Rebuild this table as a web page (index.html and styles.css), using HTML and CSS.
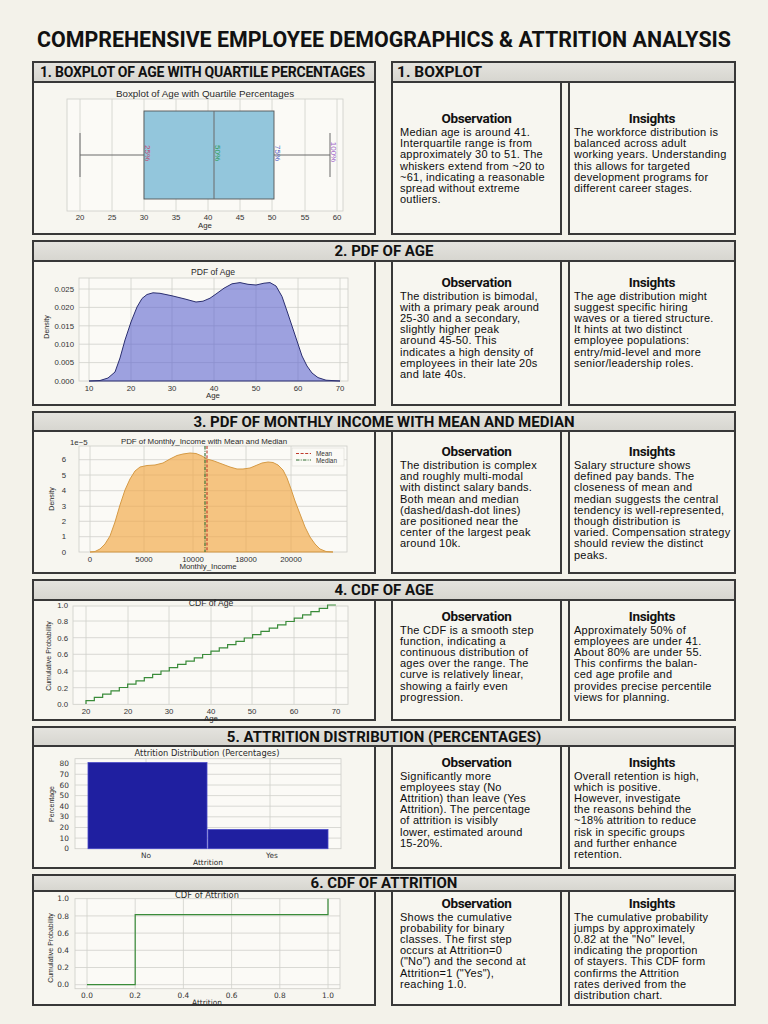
FILE: index.html
```html
<!DOCTYPE html>
<html lang="en">
<head>
<meta charset="utf-8">
<title>Comprehensive Employee Demographics &amp; Attrition Analysis</title>
<link rel="stylesheet" href="styles.css">
</head>
<body>
<div class="page">
  <h1 class="title">COMPREHENSIVE EMPLOYEE DEMOGRAPHICS &amp; ATTRITION ANALYSIS</h1>

  <section class="sec split s1">
    <div class="col-chart">
      <div class="hdr hdr-l">1. BOXPLOT OF AGE WITH QUARTILE PERCENTAGES</div>
      <div class="chart">
        <svg width="340" height="150" viewBox="34 83 340 150">
          <rect class="pbg" x="67" y="99" width="276" height="112"/>
          <text class="ct ct-big" x="205" y="97">Boxplot of Age with Quartile Percentages</text>
          <path class="grid" d="M80 99V211M112 99V211M144 99V211M176 99V211M208 99V211M240 99V211M272 99V211M305 99V211M337 99V211"/>
          <path class="whisk" d="M80 155H144M274 155H330M80 133V177M330 133V177"/>
          <rect class="qbox" x="144" y="111" width="130" height="88"/>
          <path class="whisk" d="M214 111V199"/>
          <text class="ql" fill="#c2456b" transform="translate(145 153) rotate(90)">25%</text>
          <text class="ql" fill="#2c9a55" transform="translate(215 153) rotate(90)">50%</text>
          <text class="ql" fill="#4a5cc4" transform="translate(275 153) rotate(90)">75%</text>
          <text class="ql" fill="#9a5ec8" transform="translate(331 152) rotate(90)">100%</text>
          <g class="tk tkm">
            <text x="80" y="220">20</text><text x="112" y="220">25</text><text x="144" y="220">30</text>
            <text x="176" y="220">35</text><text x="208" y="220">40</text><text x="240" y="220">45</text>
            <text x="272" y="220">50</text><text x="305" y="220">55</text><text x="337" y="220">60</text>
          </g>
          <text class="al" x="205" y="228">Age</text>
        </svg>
      </div>
    </div>
    <div class="col-text">
      <div class="hdr hdr-r">1. BOXPLOT</div>
      <div class="notes">
        <div class="note obs">
          <h3>Observation</h3>
          <p>Median age is around 41.<br>Interquartile range is from<br>approximately 30 to 51. The<br>whiskers extend from ~20 to<br>~61, indicating a reasonable<br>spread without extreme<br>outliers.</p>
        </div>
        <div class="note ins">
          <h3>Insights</h3>
          <p>The workforce distribution is<br>balanced across adult<br>working years. Understanding<br>this allows for targeted<br>development programs for<br>different career stages.</p>
        </div>
      </div>
    </div>
  </section>

  <section class="sec s2">
    <div class="hdr hdr-c">2. PDF OF AGE</div>
    <div class="body">
      <div class="chart">
        <svg width="340" height="142" viewBox="34 262 340 142">
          <rect class="pbg" x="79" y="278" width="269" height="103"/>
          <text class="ct" x="213" y="275">PDF of Age</text>
          <path class="grid" d="M89 278V381M131 278V381M172 278V381M214 278V381M256 278V381M298 278V381M340 278V381M79 289H348M79 307.4H348M79 325.8H348M79 344.2H348M79 362.6H348"/>
          <path class="kde-age" d="M89 381L100 380.5L108 378L115 372L120 358L125 340L131 322L137 307L142 298.5L147 294.5L153 292.8L160 293.3L172 295.8L185 299L196 302L203 301.2L210 298.2L216 294L224 288.2L232 283.8L240 282.6L248 284.3L256 285L264 283.2L270 282.6L276 286L282 296.5L288 314L294 332L298 344L302 356L307 366L312 373L318 377.6L326 380.2L340 381Z"/>
          <g class="tk tke">
            <text x="74" y="291.8">0.025</text><text x="74" y="310.2">0.020</text><text x="74" y="328.6">0.015</text>
            <text x="74" y="347">0.010</text><text x="74" y="365.4">0.005</text><text x="74" y="383.8">0.000</text>
          </g>
          <g class="tk tkm">
            <text x="89" y="390.5">10</text><text x="131" y="390.5">20</text><text x="172" y="390.5">30</text>
            <text x="214" y="390.5">40</text><text x="256" y="390.5">50</text><text x="298" y="390.5">60</text><text x="340" y="390.5">70</text>
          </g>
          <text class="al" x="213" y="398">Age</text>
          <text class="al yl" transform="translate(49 327) rotate(-90)">Density</text>
        </svg>
      </div>
      <div class="notes">
        <div class="note obs">
          <h3>Observation</h3>
          <p>The distribution is bimodal,<br>with a primary peak around<br>25-30 and a secondary,<br>slightly higher peak<br>around 45-50. This<br>indicates a high density of<br>employees in their late 20s<br>and late 40s.</p>
        </div>
        <div class="note ins">
          <h3>Insights</h3>
          <p>The age distribution might<br>suggest specific hiring<br>waves or a tiered structure.<br>It hints at two distinct<br>employee populations:<br>entry/mid-level and more<br>senior/leadership roles.</p>
        </div>
      </div>
    </div>
  </section>

  <section class="sec s3">
    <div class="hdr hdr-c">3. PDF OF MONTHLY INCOME WITH MEAN AND MEDIAN</div>
    <div class="body">
      <div class="chart">
        <svg width="340" height="140" viewBox="34 432 340 140">
          <rect class="pbg" x="79" y="446" width="268" height="106"/>
          <text class="ct ct-sm" x="204" y="444">PDF of Monthly_Income with Mean and Median</text>
          <text class="tk" x="70" y="445">1e−5</text>
          <path class="grid" d="M90 446V552M144 446V552M193 446V552M246 446V552M291 446V552M79 459.7H347M79 475H347M79 490.7H347M79 506.3H347M79 521.3H347M79 536.7H347"/>
          <path class="kde-inc" d="M90 552L95 551.5L100 549L105 544L110 536L115 522L120 505L125 490L130 479L135 471L140 467L147 465.5L155 465L163 463L170 459L177 455.5L183 454L190 453L196 453.5L202 456L207 459L214 461L222 464L230 467L237 469L243 469L250 468L256 465.5L262 463L268 462L273 462.5L278 465L283 470L287 478L291 489L295 501L300 514L305 527L310 537L315 544L320 549L326 551.5L333 552Z"/>
          <path class="mean" d="M207 446V552"/>
          <path class="median" d="M205 446V552"/>
          <rect class="legend" x="292" y="448" width="52" height="18"/>
          <path class="mean" d="M296 453.5H311"/>
          <path class="median" d="M296 460H311"/>
          <text class="lg" x="316" y="456">Mean</text>
          <text class="lg" x="316" y="462.5">Median</text>
          <g class="tk tke">
            <text x="66" y="462.3">6</text><text x="66" y="477.6">5</text><text x="66" y="493.3">4</text>
            <text x="66" y="508.9">3</text><text x="66" y="523.9">2</text><text x="66" y="539.3">1</text><text x="66" y="554.6">0</text>
          </g>
          <g class="tk tkm">
            <text x="90" y="562">0</text><text x="144" y="562">5000</text><text x="193" y="562">10000</text>
            <text x="246" y="562">18000</text><text x="291" y="562">20000</text>
          </g>
          <text class="al" x="208" y="569">Monthly_Income</text>
          <text class="al yl" transform="translate(54 499) rotate(-90)">Density</text>
        </svg>
      </div>
      <div class="notes">
        <div class="note obs">
          <h3>Observation</h3>
          <p>The distribution is complex<br>and roughly multi-modal<br>with distinct salary bands.<br>Both mean and median<br>(dashed/dash-dot lines)<br>are positioned near the<br>center of the largest peak<br>around 10k.</p>
        </div>
        <div class="note ins">
          <h3>Insights</h3>
          <p>Salary structure shows<br>defined pay bands. The<br>closeness of mean and<br>median suggests the central<br>tendency is well-represented,<br>though distribution is<br>varied. Compensation strategy<br>should review the distinct<br>peaks.</p>
        </div>
      </div>
    </div>
  </section>

  <section class="sec s4">
    <div class="hdr hdr-c">4. CDF OF AGE</div>
    <div class="body">
      <div class="chart">
        <svg width="340" height="118" viewBox="34 601 340 118">
          <rect class="pbg" x="73" y="606" width="275" height="98.3"/>
          <text class="ct" x="211" y="605.5">CDF of Age</text>
          <path class="grid" d="M86 606V704.3M128 606V704.3M169 606V704.3M211 606V704.3M252 606V704.3M294 606V704.3M336 606V704.3M73 621H348M73 637.7H348M73 654.3H348M73 671H348M73 687.7H348"/>
          <path class="step" d="M86 704 v-3.3h8.33v-3.3h8.33v-3.3h8.33v-3.3h8.33v-3.3h8.33 v-3.3h8.33v-3.3h8.33v-3.3h8.33v-3.3h8.33v-3.3h8.33 v-3.3h8.33v-3.3h8.33v-3.3h8.33v-3.3h8.33v-3.3h8.33 v-3.3h8.33v-3.3h8.33v-3.3h8.33v-3.3h8.33v-3.3h8.33 v-3.3h8.33v-3.3h8.33v-3.3h8.33v-3.3h8.33v-3.3h8.33 v-3.3h8.33v-3.3h8.33v-3.3h8.33v-3.3h8.33v-3.3h8.33"/>
          <g class="tk tke">
            <text x="68" y="608">1.0</text><text x="68" y="623.8">0.8</text><text x="68" y="640.5">0.6</text>
            <text x="68" y="657.1">0.6</text><text x="68" y="673.8">0.4</text><text x="68" y="690.5">0.2</text><text x="68" y="707.1">0.0</text>
          </g>
          <g class="tk tkm">
            <text x="86" y="713.5">20</text><text x="128" y="713.5">20</text><text x="169" y="713.5">30</text>
            <text x="211" y="713.5">40</text><text x="252" y="713.5">50</text><text x="294" y="713.5">60</text><text x="336" y="713.5">70</text>
          </g>
          <text class="al" x="211" y="720.5">Age</text>
          <text class="al yl" transform="translate(51 656) rotate(-90)">Cumulative Probability</text>
        </svg>
      </div>
      <div class="notes">
        <div class="note obs">
          <h3>Observation</h3>
          <p>The CDF is a smooth step<br>function, indicating a<br>continuous distribution of<br>ages over the range. The<br>curve is relatively linear,<br>showing a fairly even<br>progression.</p>
        </div>
        <div class="note ins">
          <h3>Insights</h3>
          <p>Approximately 50% of<br>employees are under 41.<br>About 80% are under 55.<br>This confirms the balan-<br>ced age profile and<br>provides precise percentile<br>views for planning.</p>
        </div>
      </div>
    </div>
  </section>

  <section class="sec s5">
    <div class="hdr hdr-c">5. ATTRITION DISTRIBUTION (PERCENTAGES)</div>
    <div class="body">
      <div class="chart">
        <svg width="340" height="120" viewBox="34 747 340 120">
          <rect class="pbg" x="75" y="758.7" width="266" height="90"/>
          <text class="ct alt" x="207" y="756.3">Attrition Distribution (Percentages)</text>
          <path class="grid" d="M146 758.7V848.7M270 758.7V848.7M75 763.7H341M75 774.3H341M75 785H341M75 795.6H341M75 806.2H341M75 816.8H341M75 827.5H341M75 838.1H341"/>
          <rect class="bar" x="88" y="762.6" width="119" height="86.1"/>
          <rect class="bar" x="208" y="829.6" width="120" height="19.1"/>
          <g class="tk tke alt">
            <text x="69" y="766.3">80</text><text x="69" y="776.9">70</text><text x="69" y="787.6">60</text>
            <text x="69" y="798.2">50</text><text x="69" y="808.8">40</text><text x="69" y="819.4">30</text>
            <text x="69" y="830.1">20</text><text x="69" y="840.7">10</text><text x="69" y="851.3">0</text>
          </g>
          <g class="tk tkm alt">
            <text x="146" y="858">No</text><text x="272" y="858">Yes</text>
          </g>
          <text class="al alt" x="208" y="865">Attrition</text>
          <text class="al yl" transform="translate(54 804) rotate(-90)">Percentage</text>
        </svg>
      </div>
      <div class="notes">
        <div class="note obs">
          <h3>Observation</h3>
          <p>Significantly more<br>employees stay (No<br>Attrition) than leave (Yes<br>Attrition). The percentage<br>of attrition is visibly<br>lower, estimated around<br>15-20%.</p>
        </div>
        <div class="note ins">
          <h3>Insights</h3>
          <p>Overall retention is high,<br>which is positive.<br>However, investigate<br>the reasons behind the<br>~18% attrition to reduce<br>risk in specific groups<br>and further enhance<br>retention.</p>
        </div>
      </div>
    </div>
  </section>

  <section class="sec s6">
    <div class="hdr hdr-c">6. CDF OF ATTRITION</div>
    <div class="body">
      <div class="chart">
        <svg width="340" height="112" viewBox="34 892 340 112">
          <rect class="pbg" x="75" y="898.7" width="265" height="90"/>
          <text class="ct alt" x="207" y="898">CDF of Attrition</text>
          <path class="grid" d="M87 898.7V988.7M135.2 898.7V988.7M183.4 898.7V988.7M231.6 898.7V988.7M279.8 898.7V988.7M328 898.7V988.7M75 915.9H340M75 933.1H340M75 950.3H340M75 967.5H340M75 984.7H340"/>
          <path class="step" d="M87 984.7H135.2V914.7H328V898.7"/>
          <g class="tk tke alt">
            <text x="69" y="901.3">1.0</text><text x="69" y="918.5">0.8</text><text x="69" y="935.7">0.6</text>
            <text x="69" y="952.9">0.4</text><text x="69" y="970.1">0.2</text><text x="69" y="987.3">0.0</text>
          </g>
          <g class="tk tkm alt">
            <text x="87" y="998">0.0</text><text x="135.2" y="998">0.2</text><text x="183.4" y="998">0.4</text>
            <text x="231.6" y="998">0.6</text><text x="279.8" y="998">0.8</text><text x="328" y="998">1.0</text>
          </g>
          <text class="al alt" x="207" y="1004.5">Attrition</text>
          <text class="al yl" transform="translate(53 948) rotate(-90)">Cumulative Probability</text>
        </svg>
      </div>
      <div class="notes">
        <div class="note obs">
          <h3>Observation</h3>
          <p>Shows the cumulative<br>probability for binary<br>classes. The first step<br>occurs at Attrition=0<br>("No") and the second at<br>Attrition=1 ("Yes"),<br>reaching 1.0.</p>
        </div>
        <div class="note ins">
          <h3>Insights</h3>
          <p>The cumulative probability<br>jumps by approximately<br>0.82 at the "No" level,<br>indicating the proportion<br>of stayers. This CDF form<br>confirms the Attrition<br>rates derived from the<br>distribution chart.</p>
        </div>
      </div>
    </div>
  </section>
</div>
</body>
</html>
```

FILE: styles.css
```css
* { box-sizing: border-box; }
html, body { margin: 0; padding: 0; }
body {
  width: 768px;
  height: 1024px;
  overflow: hidden;
  background: #f3f2ea;
  color: #151515;
  font-family: "Liberation Sans", Arial, sans-serif;
}
.page {
  padding: 28px 32px 0;
  display: flex;
  flex-direction: column;
  gap: 5px;
}
.title {
  margin: 0 -32px 4px;
  text-align: center;
  font-family: Roboto, "Liberation Sans", sans-serif;
  font-weight: 700;
  font-size: 21.4px;
  line-height: 24px;
  color: #111;
  white-space: nowrap;
}
.sec { display: flex; flex-direction: column; }
.split { flex-direction: row; gap: 15px; }
.col-chart { width: 344px; flex: none; display: flex; flex-direction: column; }
.col-text { flex: 1; display: flex; flex-direction: column; }

.hdr {
  flex: none;
  height: 22px;
  border: 2px solid #383838;
  background: linear-gradient(#e4e3de, #d7d6d0);
  font-family: Roboto, "Liberation Sans", sans-serif;
  font-weight: 700;
  font-size: 15px;
  color: #111;
  display: flex;
  align-items: center;
  padding: 0 6px;
  white-space: nowrap;
  overflow: hidden;
}
.hdr-l { font-size: 14px; letter-spacing: -0.2px; }
.hdr-r { padding-left: 4px; font-size: 15.5px; }
.hdr-c { justify-content: center; }

.body { display: flex; gap: 15px; }
.chart {
  width: 344px;
  flex: none;
  border: 2px solid #383838;
  border-top: none;
  background: #f7f6f0;
}
.chart svg { display: block; overflow: visible; }
.notes { flex: 1; display: flex; gap: 6px; }
.note {
  border: 2px solid #383838;
  border-top: none;
  background: #f7f6f0;
  font-size: 11px;
  line-height: 11.2px;
  letter-spacing: 0.25px;
  white-space: nowrap;
  color: #0d0d0d;
}
.obs { width: 171px; flex: none; }
.ins { flex: 1; }
.note h3 {
  margin: 0 0 1px;
  text-align: center;
  font-family: Roboto, "Liberation Sans", sans-serif;
  font-weight: 700;
  font-size: 13.5px;
  line-height: 15px;
  letter-spacing: -0.3px;
  color: #111;
}
.note p { margin: 0; }
.obs p { padding-left: 7px; }
.ins p { padding-left: 4px; }

/* section sizes */
.s1 .chart, .s1 .notes { height: 152px; }
.s1 .note { padding-top: 28px; }
.s2 .body { height: 144px; }
.s2 .note { padding-top: 12.5px; }
.s3 .hdr { height: 21px; }
.s3 .body { height: 142px; }
.s3 .note { padding-top: 12px; }
.s4 .body { height: 120px; }
.s4 .note { padding-top: 7.5px; }
.s5 .hdr { height: 21px; }
.s5 .body { height: 122px; }
.s5 .note { padding-top: 7.5px; }
.s6 .hdr { height: 18px; }
.s6 .body { height: 114px; }
.s6 .note { padding-top: 3.5px; }

/* chart parts */
.pbg { fill: #fbfaf6; stroke: #cdcdc8; stroke-width: 0.8; }
.grid { fill: none; stroke: #d0d0cb; stroke-width: 0.8; }
.ct { font-family: "Liberation Sans", Arial, sans-serif; font-size: 8.6px; fill: #2a2a2a; text-anchor: middle; }
.ct-big { font-size: 9.8px; }
.ct-sm { font-size: 7.9px; }
.tk { font-family: "Liberation Sans", Arial, sans-serif; font-size: 7.8px; fill: #333; }
.tkm { text-anchor: middle; }
.tke { text-anchor: end; }
.al { font-family: "Liberation Sans", Arial, sans-serif; font-size: 7.8px; fill: #2a2a2a; text-anchor: middle; }
.yl { font-size: 7px; }
.alt { font-family: "DejaVu Sans", "Liberation Sans", sans-serif; }
.ct.alt { font-size: 8.3px; }
.tk.alt { font-size: 7.4px; }
.al.alt { font-size: 7.4px; }

.qbox { fill: #93c6dc; stroke: #555; stroke-width: 0.9; }
.whisk { fill: none; stroke: #6a6a6a; stroke-width: 1; }
.ql { font-family: "Liberation Sans", Arial, sans-serif; font-size: 8px; text-anchor: middle; }

.kde-age { fill: #5a61cf; fill-opacity: 0.58; stroke: #2b2f70; stroke-width: 1; }
.kde-inc { fill: #f2a94a; fill-opacity: 0.68; stroke: #d59a45; stroke-width: 1; }
.mean { fill: none; stroke: #c0392b; stroke-width: 1.1; stroke-dasharray: 3 1.6; }
.median { fill: none; stroke: #2f6b2f; stroke-width: 1.1; stroke-dasharray: 3.5 1.2 1 1.2; }
.legend { fill: #fbfaf6; stroke: #dcdcd6; stroke-width: 0.6; }
.lg { font-family: "Liberation Sans", Arial, sans-serif; font-size: 6.4px; fill: #333; }

.step { fill: none; stroke: #3a8c3a; stroke-width: 1.2; }
.bar { fill: #1f1fa0; stroke: #4848c8; stroke-width: 0.8; }
```
